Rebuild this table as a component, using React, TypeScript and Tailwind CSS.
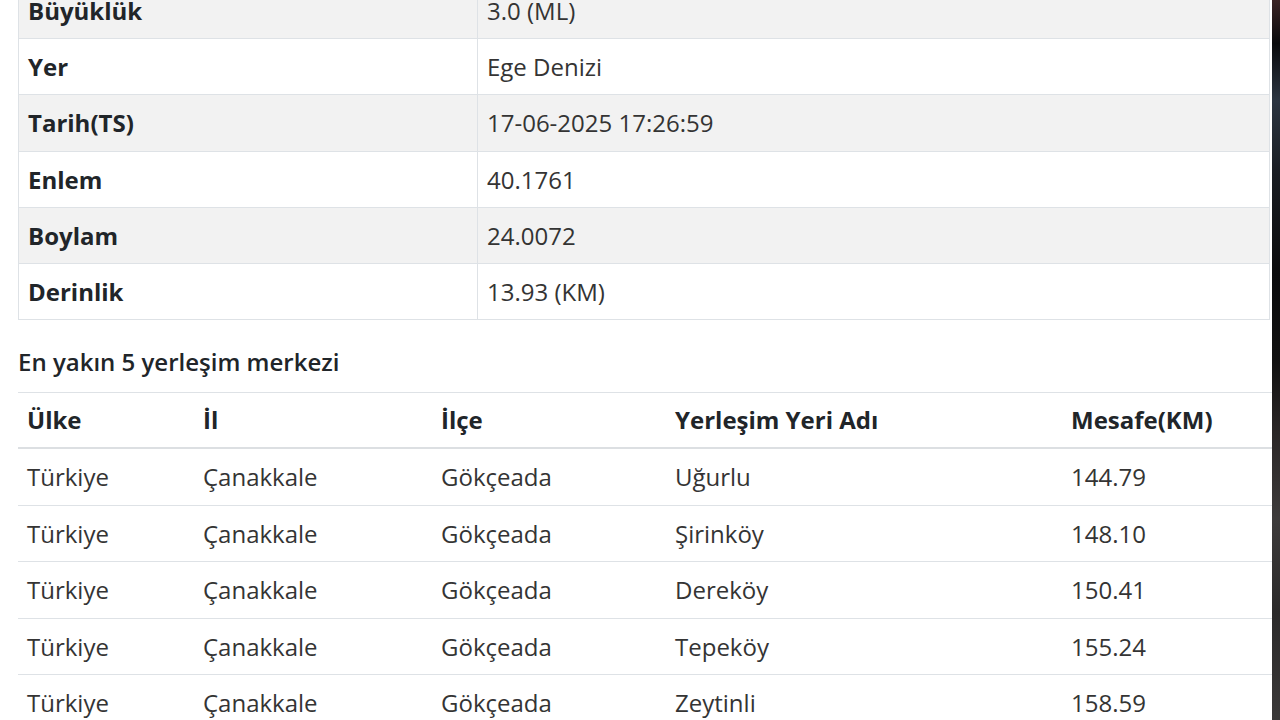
import React from 'react';

const details: [string, string][] = [
  ['Büyüklük', '3.0 (ML)'],
  ['Yer', 'Ege Denizi'],
  ['Tarih(TS)', '17-06-2025 17:26:59'],
  ['Enlem', '40.1761'],
  ['Boylam', '24.0072'],
  ['Derinlik', '13.93 (KM)'],
];

const places = [
  ['Türkiye', 'Çanakkale', 'Gökçeada', 'Uğurlu', '144.79'],
  ['Türkiye', 'Çanakkale', 'Gökçeada', 'Şirinköy', '148.10'],
  ['Türkiye', 'Çanakkale', 'Gökçeada', 'Dereköy', '150.41'],
  ['Türkiye', 'Çanakkale', 'Gökçeada', 'Tepeköy', '155.24'],
  ['Türkiye', 'Çanakkale', 'Gökçeada', 'Zeytinli', '158.59'],
];

export default function App() {
  return (
    <div
      className="flex h-[720px] w-[1280px] overflow-hidden bg-white text-[24px] text-[#212529]"
      style={{ fontFamily: '"Open Sans", "Noto Sans", sans-serif' }}
    >
      <div className="flex-1 pl-[18px]">
        <table className="-mt-[18px] w-[1252px] table-fixed border-collapse border border-[#dee2e6]">
          <colgroup>
            <col className="w-[459px]" />
            <col />
          </colgroup>
          <tbody>
            {details.map(([k, v], i) => (
              <tr key={k} className={i % 2 === 0 ? 'bg-[#f2f2f2]' : 'bg-white'}>
                <th className="border border-[#dee2e6] px-[9px] py-[11px] text-left font-bold leading-[33.2px]">
                  {k}
                </th>
                <td className="border border-[#dee2e6] px-[9px] py-[11px] leading-[33.2px] text-[#343434]">
                  {v}
                </td>
              </tr>
            ))}
          </tbody>
        </table>

        <h5 className="mt-[25px] mb-[13px] font-semibold leading-[34px] text-[#212529]">
          En yakın 5 yerleşim merkezi
        </h5>

        <table className="w-[1254px] table-fixed border-collapse">
          <colgroup>
            <col className="w-[176px]" />
            <col className="w-[238px]" />
            <col className="w-[234px]" />
            <col className="w-[396px]" />
            <col />
          </colgroup>
          <thead>
            <tr className="border-t border-b-2 border-t-[#dee2e6] border-b-[#dcdfe2]">
              {['Ülke', 'İl', 'İlçe', 'Yerleşim Yeri Adı', 'Mesafe(KM)'].map((h) => (
                <th key={h} className="px-[9px] py-[11px] text-left font-bold leading-[32px]">
                  {h}
                </th>
              ))}
            </tr>
          </thead>
          <tbody>
            {places.map((row) => (
              <tr key={row[3]} className="border-b border-[#dee2e6]">
                {row.map((c, j) => (
                  <td key={j} className="px-[9px] py-[11px] leading-[33.5px] text-[#343434]">
                    {c}
                  </td>
                ))}
              </tr>
            ))}
          </tbody>
        </table>
      </div>
      <div className="w-[8px] shrink-0 bg-[linear-gradient(180deg,#3a2424_0%,#0a0a0c_6%,#2c3541_14%,#1a1d22_24%,#0b0b0c_38%,#111_50%,#2a2626_60%,#3d3b3b_72%,#2b2a2a_85%,#3a3838_100%)]" />
    </div>
  );
}
